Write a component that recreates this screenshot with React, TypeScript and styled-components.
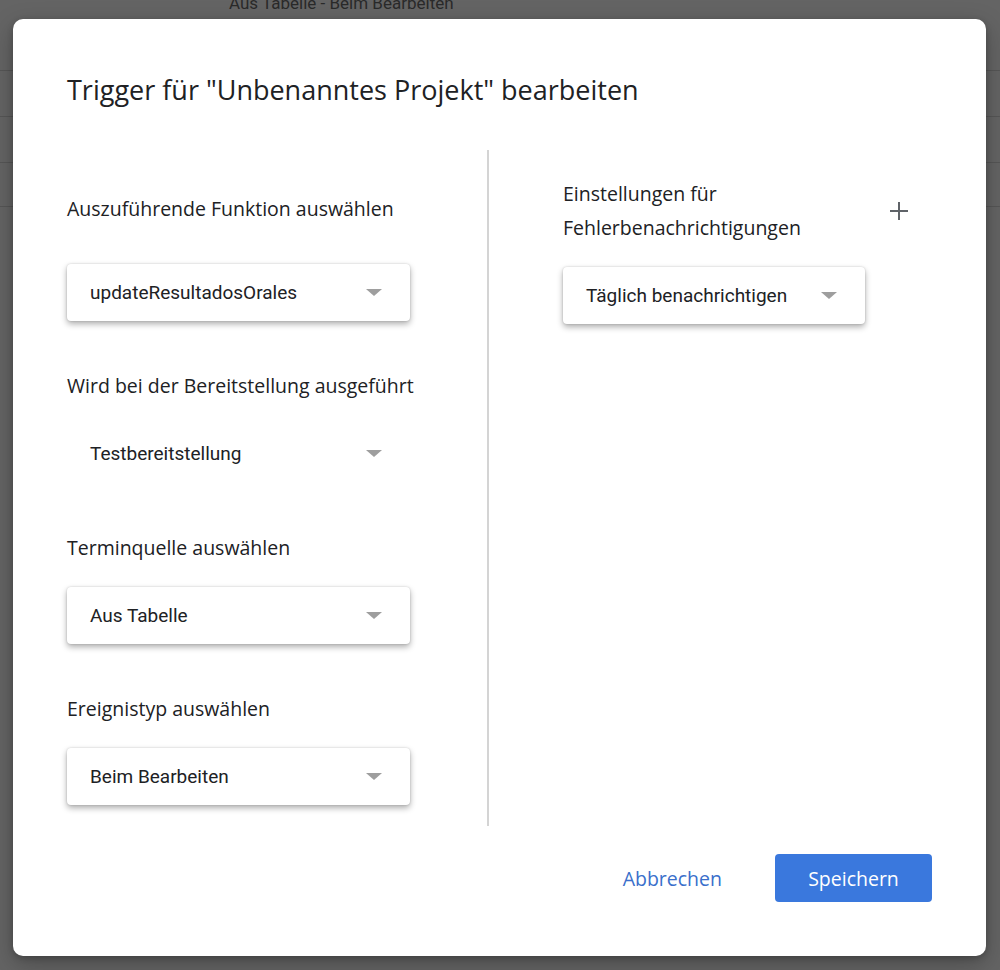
import React from "react";
import styled, { createGlobalStyle } from "styled-components";

const Global = createGlobalStyle`
  html, body { margin: 0; padding: 0; }
  body { width: 1000px; height: 970px; overflow: hidden; font-family: Roboto, "Liberation Sans", sans-serif; }
`;

const Page = styled.div`
  position: relative;
  width: 1000px;
  height: 970px;
  background: #646464;
  overflow: hidden;
`;

const BgRow = styled.div<{ $h: number }>`
  height: ${(p) => p.$h}px;
  border-bottom: 1px solid #565656;
  box-sizing: border-box;
  display: flex;
  align-items: flex-start;
`;

const BgText = styled.div`
  margin: -7px 0 0 229px;
  font-family: Roboto, sans-serif;
  font-size: 17px;
  color: #2a2a2a;
`;

const Dialog = styled.div`
  position: absolute;
  left: 13px;
  top: 19px;
  width: 973px;
  height: 937px;
  box-sizing: border-box;
  background: #fff;
  border-radius: 10px;
  box-shadow: 0 8px 24px rgba(0, 0, 0, 0.25), 0 2px 6px rgba(0, 0, 0, 0.2);
  padding: 51px 54px 54px 54px;
  display: flex;
  flex-direction: column;
`;

const Title = styled.h1`
  margin: 0;
  font-family: "Open Sans", Roboto, sans-serif;
  font-weight: 500;
  font-size: 27px;
  line-height: 40px;
  color: #202124;
`;

const Body = styled.div`
  display: grid;
  grid-template-columns: 420px 2px 1fr;
  margin-top: 40px;
  height: 676px;
`;

const Divider = styled.div`
  background: #d4d4d4;
  width: 2px;
  height: 100%;
`;

const Column = styled.div<{ $pl: number }>`
  display: flex;
  flex-direction: column;
  padding-left: ${(p) => p.$pl}px;
`;

const Label = styled.div<{ $mt: number }>`
  font-family: "Open Sans", Roboto, sans-serif;
  font-size: 19.5px;
  line-height: 34px;
  color: #202124;
  margin-top: ${(p) => p.$mt}px;
`;

const HeaderRow = styled.div`
  display: flex;
  align-items: center;
  justify-content: space-between;
  margin-top: 27px;
  width: 346px;
`;

const PlusBtn = styled.div`
  width: 20px;
  height: 20px;
  display: flex;
  align-items: center;
  justify-content: center;
`;

const Select = styled.div<{ $flat?: boolean; $w: number; $mt: number }>`
  width: ${(p) => p.$w}px;
  height: 57px;
  margin-top: ${(p) => p.$mt}px;
  box-sizing: border-box;
  border-radius: 4px;
  background: #fff;
  box-shadow: ${(p) =>
    p.$flat ? "none" : "0 3px 6px rgba(0,0,0,0.32), 0 0 2px rgba(0,0,0,0.18)"};
  display: flex;
  align-items: center;
  justify-content: space-between;
  padding: 0 28px 0 23px;
  font-family: Roboto, sans-serif;
  font-size: 19px;
  color: #202124;
`;

const Arrow = styled.span`
  width: 0;
  height: 0;
  border-left: 8px solid transparent;
  border-right: 8px solid transparent;
  border-top: 7px solid #9e9e9e;
`;

const Footer = styled.div`
  margin-top: auto;
  display: flex;
  justify-content: flex-end;
  align-items: center;
  gap: 29px;
`;

const TextButton = styled.button`
  border: none;
  background: transparent;
  height: 48px;
  padding: 0 24px;
  font-family: "Open Sans", Roboto, sans-serif;
  font-weight: 500;
  font-size: 19.5px;
  color: #3a6fcb;
  cursor: pointer;
`;

const PrimaryButton = styled.button`
  border: none;
  background: #3a78dd;
  border-radius: 4px;
  width: 157px;
  height: 48px;
  font-family: "Open Sans", Roboto, sans-serif;
  font-weight: 500;
  font-size: 19.5px;
  color: #fff;
  cursor: pointer;
`;

const Plus = () => (
  <svg width="20" height="20" viewBox="0 0 20 20">
    <path d="M10 1v18M1 10h18" stroke="#5f6368" strokeWidth="2" fill="none" />
  </svg>
);

export default function App() {
  return (
    <>
      <Global />
      <Page>
        <BgRow $h={71}>
          <BgText>Aus Tabelle - Beim Bearbeiten</BgText>
        </BgRow>
        <BgRow $h={46} />
        <BgRow $h={46} />
        <BgRow $h={44} />
        <Dialog>
          <Title>Trigger für "Unbenanntes Projekt" bearbeiten</Title>
          <Body>
            <Column $pl={0}>
              <Label $mt={42}>Auszuführende Funktion auswählen</Label>
              <Select $w={343} $mt={38}>
                updateResultadosOrales
                <Arrow />
              </Select>
              <Label $mt={48}>Wird bei der Bereitstellung ausgeführt</Label>
              <Select $w={343} $mt={22} $flat>
                Testbereitstellung
                <Arrow />
              </Select>
              <Label $mt={49}>Terminquelle auswählen</Label>
              <Select $w={343} $mt={22}>
                Aus Tabelle
                <Arrow />
              </Select>
              <Label $mt={48}>Ereignistyp auswählen</Label>
              <Select $w={343} $mt={22}>
                Beim Bearbeiten
                <Arrow />
              </Select>
            </Column>
            <Divider />
            <Column $pl={74}>
              <HeaderRow>
                <Label $mt={0}>
                  Einstellungen für
                  <br />
                  Fehlerbenachrichtigungen
                </Label>
                <PlusBtn>
                  <Plus />
                </PlusBtn>
              </HeaderRow>
              <Select $w={302} $mt={22}>
                Täglich benachrichtigen
                <Arrow />
              </Select>
            </Column>
          </Body>
          <Footer>
            <TextButton>Abbrechen</TextButton>
            <PrimaryButton>Speichern</PrimaryButton>
          </Footer>
        </Dialog>
      </Page>
    </>
  );
}
